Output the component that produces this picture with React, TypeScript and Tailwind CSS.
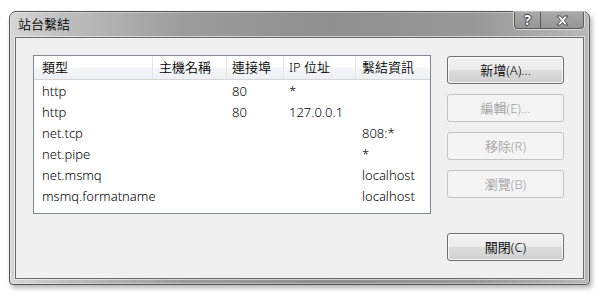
import * as React from 'react';

interface Binding {
  type: string;
  host: string;
  port: string;
  ip: string;
  info: string;
}

const BINDINGS: Binding[] = [
  { type: 'http', host: '', port: '80', ip: '*', info: '' },
  { type: 'http', host: '', port: '80', ip: '127.0.0.1', info: '' },
  { type: 'net.tcp', host: '', port: '', ip: '', info: '808:*' },
  { type: 'net.pipe', host: '', port: '', ip: '', info: '*' },
  { type: 'net.msmq', host: '', port: '', ip: '', info: 'localhost' },
  { type: 'msmq.formatname', host: '', port: '', ip: '', info: 'localhost' },
];

const HEADERS = ['類型', '主機名稱', '連接埠', 'IP 位址', '繫結資訊'];
const PADS = ['pl-[8px]', 'pl-[6px]', 'pl-[5px]', 'pl-[5px]', 'pl-[6px]'];

const DialogButton: React.FC<{ label: string; disabled?: boolean }> = ({ label, disabled }) => {
  if (disabled) {
    return (
      <button
        disabled
        className="h-[28px] w-[117px] rounded-[3px] border border-[#c2c4c6] bg-[#f4f4f4] text-[#a3a3a3]"
      >
        {label}
      </button>
    );
  }
  return (
    <button className="h-[28px] w-[117px] rounded-[3px] border border-[#707070] bg-[linear-gradient(180deg,#f2f2f2_0%,#ebebeb_50%,#dddddd_51%,#cfcfcf_100%)] text-black shadow-[inset_0_0_0_1px_rgba(255,255,255,0.8)]">
      {label}
    </button>
  );
};

const App: React.FC = () => {
  return (
    <div className="h-[300px] w-[600px] bg-white pl-[9px] pt-[11px] font-['Noto_Sans','Noto_Sans_CJK_TC',sans-serif] text-[13px] font-[350] leading-none">
      {/* Window frame */}
      <div className="flex h-[274px] w-[581px] flex-col rounded-t-[7px] rounded-b-[4px] border border-[#565656] bg-[linear-gradient(90deg,#d6d6d6_0%,#bdbdbd_10%,#9c9c9c_30%,#8f8f8f_55%,#989898_80%,#b8b8b8_100%)] px-[5px] pb-[5px] shadow-[2px_3px_5px_rgba(0,0,0,0.3),inset_0_0_0_1px_rgba(255,255,255,0.35)]">
        {/* Title bar */}
        <div className="flex h-[25px] items-start justify-between">
          <span className="pl-[3px] pt-[6px] text-black">站台繫結</span>
          <div className="flex h-[17px] rounded-b-[4px] shadow-[0_0_0_1px_rgba(235,235,235,0.7)]">
            <div className="flex w-[27px] items-center justify-center rounded-bl-[4px] border border-t-0 border-[#5a5a5a] bg-[linear-gradient(180deg,#a9a9a9_0%,#959595_100%)] pb-[1px] text-[14px] font-bold text-white [text-shadow:0_0_1px_#333,1px_0_0_#444,-1px_0_0_#444,0_1px_0_#444,0_-1px_0_#444]">
              ?
            </div>
            <div className="flex w-[43px] items-center justify-center rounded-br-[4px] border border-l-0 border-t-0 border-[#5a5a5a] bg-[linear-gradient(180deg,#a9a9a9_0%,#959595_100%)]">
              <svg width="13" height="11" viewBox="0 0 13 11">
                <path
                  d="M1 1 L4.5 1 L6.5 3.5 L8.5 1 L12 1 L8.2 5.5 L12 10 L8.5 10 L6.5 7.5 L4.5 10 L1 10 L4.8 5.5 Z"
                  fill="#ffffff"
                  stroke="#4a4a4a"
                  strokeWidth="1"
                  strokeLinejoin="round"
                />
              </svg>
            </div>
          </div>
        </div>

        {/* Client area */}
        <div className="flex flex-1 flex-col border border-[#6b6b6b] bg-[#f0f0f0] pl-[17px] pr-[19px] pt-[17px] shadow-[0_0_0_1px_rgba(255,255,255,0.55)]">
          <div className="flex gap-[16px]">
            {/* List view */}
            <div className="h-[159px] w-[398px] border border-[#828790] bg-white">
              <div className="grid h-[24px] grid-cols-[119px_74px_57px_72px_74px] border-b border-[#d5d5d5] bg-[linear-gradient(180deg,#ffffff_0%,#ffffff_45%,#f4f5f7_55%,#eef0f3_100%)]">
                {HEADERS.map((h, i) => (
                  <div
                    key={h}
                    className={`flex items-center ${PADS[i]} ${i < 4 ? 'border-r border-[#e2e4e8]' : ''}`}
                  >
                    {h}
                  </div>
                ))}
              </div>
              {BINDINGS.map((b, r) => (
                <div key={r} className="grid h-[21px] grid-cols-[119px_74px_57px_72px_74px] pt-[1px]">
                  {[b.type, b.host, b.port, b.ip, b.info].map((v, i) => (
                    <div key={i} className={`flex items-center whitespace-nowrap ${PADS[i]}`}>
                      {v}
                    </div>
                  ))}
                </div>
              ))}
            </div>

            {/* Action buttons */}
            <div className="flex flex-col gap-[10px] pt-[1px]">
              <DialogButton label="新增(A)..." />
              <DialogButton label="編輯(E)..." disabled />
              <DialogButton label="移除(R)" disabled />
              <DialogButton label="瀏覽(B)" disabled />
            </div>
          </div>

          <div className="mt-[19px] flex justify-end">
            <DialogButton label="關閉(C)" />
          </div>
        </div>
      </div>
    </div>
  );
};

export default App;
